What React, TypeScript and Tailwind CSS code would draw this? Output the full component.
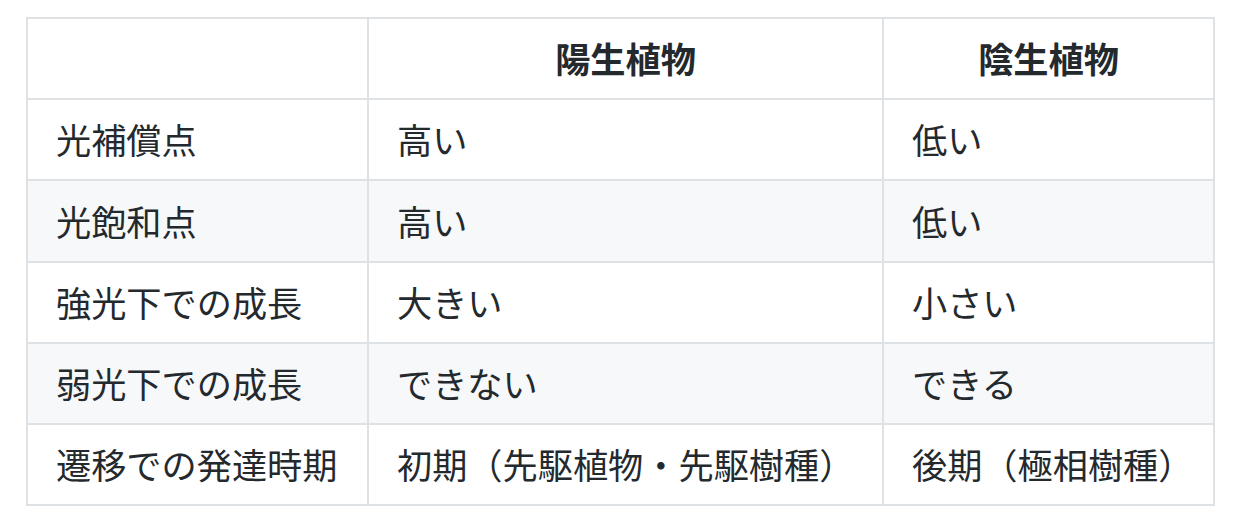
import React from "react";

const rows: [string, string, string][] = [
  ["光補償点", "高い", "低い"],
  ["光飽和点", "高い", "低い"],
  ["強光下での成長", "大きい", "小さい"],
  ["弱光下での成長", "できない", "できる"],
  ["遷移での発達時期", "初期（先駆植物・先駆樹種）", "後期（極相樹種）"],
];

export default function App() {
  return (
    <div
      className="min-h-[529px] w-[1240px] bg-white pl-[26px] pt-[17px] text-[#24292e]"
      style={{ fontFamily: '"Noto Sans CJK JP", "Noto Sans", sans-serif' }}
    >
      <table className="w-[1187px] table-fixed border-collapse text-[35.2px] leading-[52.8px]">
        <colgroup>
          <col className="w-[341px]" />
          <col className="w-[515px]" />
          <col className="w-[331px]" />
        </colgroup>
        <thead>
          <tr className="bg-white">
            <th className="border-[2px] border-[#dfe2e5] px-[28px] py-[13.2px] text-center font-bold"></th>
            <th className="border-[2px] border-[#dfe2e5] px-[28px] py-[13.2px] text-center font-bold">陽生植物</th>
            <th className="border-[2px] border-[#dfe2e5] px-[28px] py-[13.2px] text-center font-bold">陰生植物</th>
          </tr>
        </thead>
        <tbody>
          {rows.map((r, i) => (
            <tr key={i} className={i % 2 === 1 ? "bg-[#f6f8fa]" : "bg-white"}>
              {r.map((c, j) => (
                <td
                  key={j}
                  className="whitespace-nowrap border-[2px] border-[#dfe2e5] px-[28px] py-[13.2px] text-left font-normal"
                >
                  {c}
                </td>
              ))}
            </tr>
          ))}
        </tbody>
      </table>
    </div>
  );
}
